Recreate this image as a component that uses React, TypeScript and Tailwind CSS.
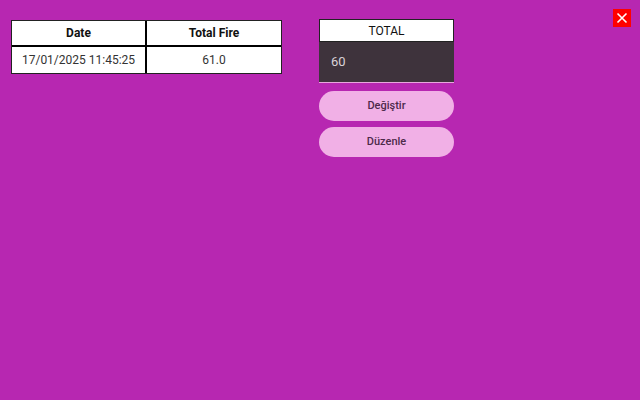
export default function App() {
  return (
    <div
      className="relative w-[640px] h-[400px] bg-[#b727b1] overflow-hidden"
      style={{ fontFamily: "Roboto, 'Liberation Sans', sans-serif" }}
    >
      <div className="flex items-start pt-[19px] pl-[11px]">
        {/* Tablo */}
        <div className="mt-[1px] w-[271px] border border-[#222] bg-white">
          <div className="flex h-[26px] border-b-2 border-black">
            <div className="w-[135px] flex items-center justify-center border-r-2 border-black text-[12px] font-bold text-[#111]">
              Date
            </div>
            <div className="flex-1 flex items-center justify-center text-[12px] font-bold text-[#111]">
              Total Fire
            </div>
          </div>
          <div className="flex h-[26px]">
            <div className="w-[135px] flex items-center justify-center border-r-2 border-black text-[12px] text-[#333]">
              17/01/2025 11:45:25
            </div>
            <div className="flex-1 flex items-center justify-center text-[12px] text-[#333]">
              61.0
            </div>
          </div>
        </div>

        {/* Toplam paneli */}
        <div className="ml-[37px] w-[135px] flex flex-col">
          <div className="h-[23px] border border-[#222] bg-white flex items-center justify-center text-[12px] text-[#111]">
            TOTAL
          </div>
          <div className="h-[41px] bg-[#3e333c] border-b border-[#e8a6de] flex items-center pl-[12px] text-[13px] text-[#d9d2d8]">
            60
          </div>
          <button className="mt-[8px] h-[30px] rounded-full bg-[#f1b0e6] text-[11px] font-medium text-[#4d2a4a]">
            Değiştir
          </button>
          <button className="mt-[6px] h-[30px] rounded-full bg-[#f1b0e6] text-[11px] font-medium text-[#4d2a4a]">
            Düzenle
          </button>
        </div>
      </div>

      {/* Kapat */}
      <button className="absolute left-[613px] top-[9px] w-[18px] h-[18px] bg-[#ff0000] flex items-center justify-center">
        <svg width="12" height="12" viewBox="0 0 12 12">
          <path d="M1.5 1.5 L10.5 10.5 M10.5 1.5 L1.5 10.5" stroke="white" strokeWidth="1.6" />
        </svg>
      </button>
    </div>
  );
}
